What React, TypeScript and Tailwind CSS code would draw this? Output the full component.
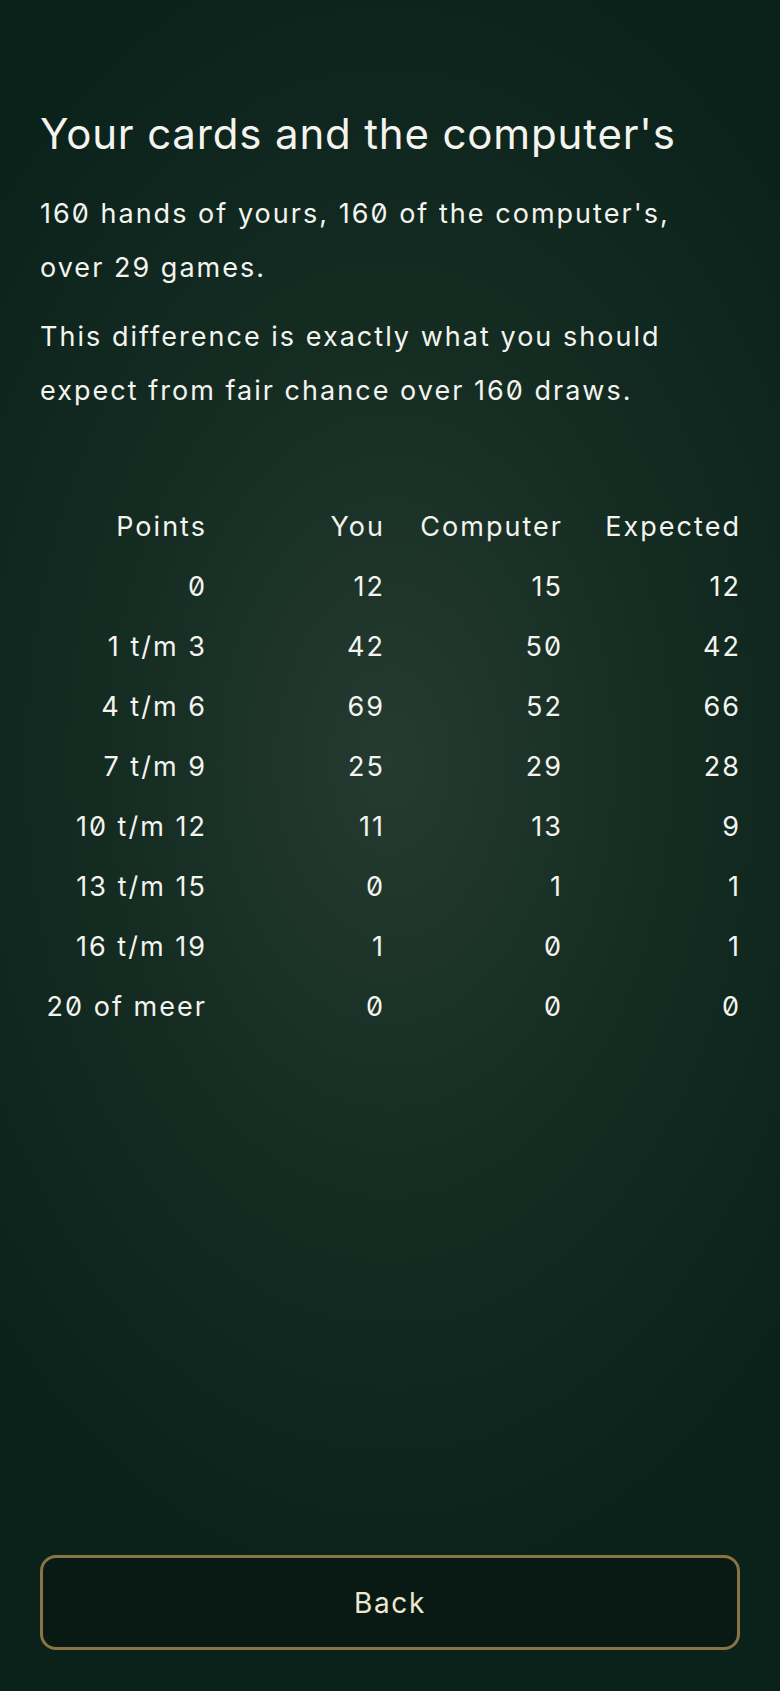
const rows = [
  { points: "0", you: "12", computer: "15", expected: "12" },
  { points: "1 t/m 3", you: "42", computer: "50", expected: "42" },
  { points: "4 t/m 6", you: "69", computer: "52", expected: "66" },
  { points: "7 t/m 9", you: "25", computer: "29", expected: "28" },
  { points: "10 t/m 12", you: "11", computer: "13", expected: "9" },
  { points: "13 t/m 15", you: "0", computer: "1", expected: "1" },
  { points: "16 t/m 19", you: "1", computer: "0", expected: "1" },
  { points: "20 of meer", you: "0", computer: "0", expected: "0" },
];

const App = () => {
  return (
    <main className="flex h-[1691px] w-full flex-col bg-[radial-gradient(ellipse_70%_50%_at_50%_45%,#253b31_0%,#152c23_50%,#0a221a_100%)] px-10 font-['Inter',sans-serif] text-[#f4f4ef] slashed-zero">
      <h1 className="mt-[108px] text-[42px] leading-[52px] font-normal tracking-[0.02em]">
        Your cards and the computer's
      </h1>
      <p className="mt-[27px] text-[27px] leading-[54px] tracking-[0.075em]">
        160 hands of yours, 160 of the computer's, over 29 games.
      </p>
      <p className="mt-[15px] text-[27px] leading-[54px] tracking-[0.075em]">
        This difference is exactly what you should expect from fair chance over 160 draws.
      </p>

      {/* Table */}
      <div className="mt-[79px] ml-[2px] grid grid-cols-[165px_178px_178px_178px] text-right text-[27px] leading-[60px] tracking-[0.075em]">
        <div>Points</div>
        <div>You</div>
        <div>Computer</div>
        <div>Expected</div>
        {rows.map((r) => (
          <div key={r.points} className="contents">
            <div>{r.points}</div>
            <div>{r.you}</div>
            <div>{r.computer}</div>
            <div>{r.expected}</div>
          </div>
        ))}
      </div>

      <button className="mt-auto mb-[41px] h-[95px] w-full rounded-[16px] border-[3px] border-[#8a7446] bg-[#081a13] text-[28px] tracking-[0.06em] text-[#ece8d2]">
        Back
      </button>
    </main>
  );
};

export default App;
